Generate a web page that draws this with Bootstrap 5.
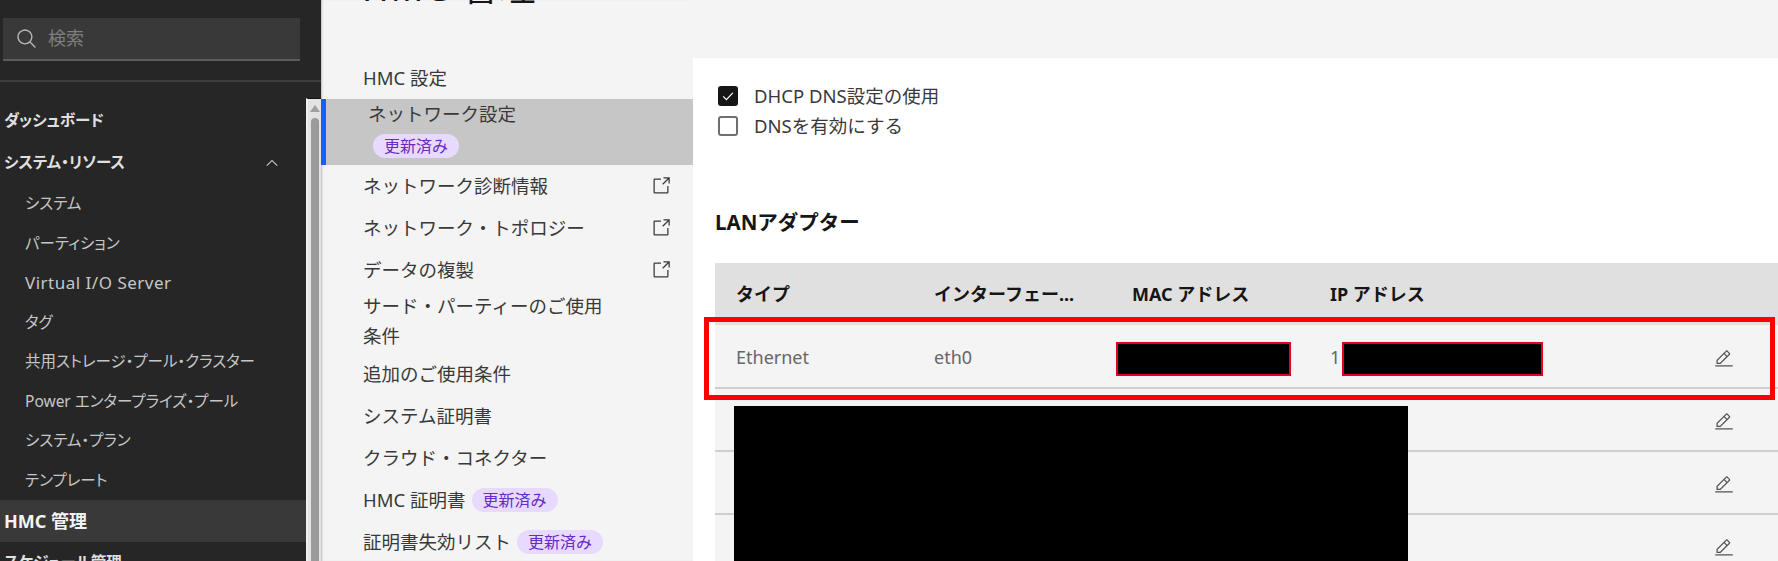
<!DOCTYPE html>
<html lang="ja">
<head>
  <meta charset="UTF-8" />
  <title>HMC 管理</title>
  <link href="https://cdn.jsdelivr.net/npm/bootstrap@5.3.0/dist/css/bootstrap.min.css" rel="stylesheet">
  <style>
    html, body { height: 561px; overflow: hidden; }
    body { font-family: "Noto Sans", "Noto Sans CJK JP", sans-serif; font-size: 18px; background: #f4f4f4; color: #393939; }
    .page-wrap { position: relative; height: 561px; overflow: hidden; }

    /* サイドバー */
    .side-bar { width: 321px; flex: none; background: #262626; color: #c6c6c6; font-feature-settings: "palt"; }
    .side-top { height: 98px; padding-top: 18px; }
    .search-box { margin: 0 21px 0 3px; height: 43px; background: #393939; border-bottom: 2px solid #5c5c5c; padding-left: 13px; gap: 10px; color: #7f7f7f; font-size: 18px; }
    .side-line { margin-top: 19px; height: 2px; background: #3d3d3d; }
    .side-nav { width: 306px; padding-top: 2px; }
    .side-item { height: 42px; padding-left: 4px; padding-right: 25px; font-weight: 700; color: #e0e0e0; font-size: 15.5px; }
    .side-item.is-on { background: #393939; color: #f4f4f4; font-size: 18px; }
    .side-sub { height: 39.5px; padding-left: 25px; font-size: 15.5px; }
    .side-latin { font-size: 17px; letter-spacing: .5px; }
    .side-scroll { width: 15px; background: #e3e3e3; border-top: 1px solid #111; border-left: 2px solid #f0f0f0; }
    .scroll-arrow { width: 0; height: 0; margin: 6px auto 6px; border: 5px solid transparent; border-top: 0; border-bottom: 7px solid #a0a0a0; }
    .scroll-thumb { width: 8px; margin: 0 auto; height: 500px; background: #9b9b9b; border-radius: 4px 4px 0 0; }

    /* メニュー */
    .menu-col { width: 372px; flex: none; box-shadow: inset 2px 0 2px -1px #bbb; }
    .page-title { height: 57px; overflow: hidden; padding-left: 41px; }
    .page-title h1 { margin: -32px 0 0; font-size: 36px; line-height: 40px; font-weight: 400; letter-spacing: 2px; color: #161616; }
    .menu-item { min-height: 42px; padding-left: 42px; padding-right: 22px; font-size: 18.5px; color: #393939; }
    .menu-item.is-wrap { min-height: 60px; line-height: 30px; margin-bottom: 2px; }
    .menu-item.is-active { height: 66px; background: #c6c6c6; border-left: 5px solid #0f62fe; padding-left: 42px; }
    .menu-text { width: 250px; }
    .active-label { line-height: 30px; }
    .upd-tag { display: inline-block; font-size: 16px; line-height: 24px; height: 24px; padding: 0 11px; border-radius: 12px; background: #e8daff; color: #6929c4; }
    .upd-tag.ms-tag { margin-left: 6px; }
    .upd-tag.under { margin: 5px 0 0 5px; }

    /* 右パネル */
    .panel-area { margin-top: 58px; background: #fff; min-width: 0; padding: 23px 0 0 22px; }
    .chk-row { height: 30px; margin: 0 0 0 3px; gap: 16px; font-size: 18.5px; }
    .chk-row .form-check-input { width: 20px; height: 20px; margin: 0; flex: none; border: 2px solid #6f6f6f; border-radius: 3px; }
    .chk-row .form-check-input:checked { background-color: #161616; border-color: #161616; background-image: url("data:image/svg+xml,%3csvg xmlns='http://www.w3.org/2000/svg' viewBox='0 0 20 20'%3e%3cpath fill='none' stroke='%23fff' stroke-width='1.5' d='M4 10.5l4 4 8-8.5'/%3e%3c/svg%3e"); }
    .lan-title { margin: 62px 0 0; height: 39px; line-height: 39px; font-size: 20.5px; font-weight: 700; color: #161616; }
    .lan-table { margin: 21px 0 0; table-layout: fixed; width: 100%; }
    .lan-table th, .lan-table td { padding: 0 0 0 21px; vertical-align: middle; white-space: nowrap; }
    .lan-table thead th { height: 62px; background: #e0e0e0; color: #161616; font-weight: 700; border: 0; font-size: 18px; }
    .lan-table tbody td { height: 63px; background: #f4f4f4; color: #666; border-bottom: 2px solid #cfcfcf; font-size: 18px; padding-top: 2px; }
    .lan-table .col-fix { width: 198px; }
    .lan-table .edit-cell { text-align: right; padding-right: 44px; }

    /* 墨消しと注記 */
    .mask-black { position: absolute; background: #000; }
    .mask-mac { left: 1116px; top: 342px; width: 175px; height: 34px; border: 2px solid #e6001e; }
    .mask-ip { left: 1342px; top: 342px; width: 201px; height: 34px; border: 2px solid #e6001e; }
    .mask-rows { left: 734px; top: 406px; width: 674px; height: 155px; }
    .red-mark { position: absolute; left: 704px; top: 317px; width: 1071px; height: 83px; border: 5px solid #f00; }
  </style>
</head>
<body>
  <div class="page-wrap d-flex">
    <div class="side-bar">
      <div class="side-top">
        <div class="search-box d-flex align-items-center">
          <svg width="22" height="22" viewBox="0 0 32 32" fill="#b5b5b5"><path d="M29,27.5859l-7.5521-7.5521a11.0177,11.0177,0,1,0-1.4141,1.4141L27.5859,29ZM4,13a9,9,0,1,1,9,9A9.01,9.01,0,0,1,4,13Z"/></svg>
          <span>検索</span>
        </div>
        <div class="side-line"></div>
      </div>
      <div class="d-flex">
        <div class="side-nav">
          <div class="side-item d-flex align-items-center">ダッシュボード</div>
          <div class="side-item d-flex align-items-center justify-content-between">
            <span>システム・リソース</span>
            <svg width="18" height="18" viewBox="0 0 32 32" fill="#c6c6c6"><path d="M16 10 26 20 24.6 21.4 16 12.8 7.4 21.4 6 20z"/></svg>
          </div>
          <div class="side-sub d-flex align-items-center">システム</div>
          <div class="side-sub d-flex align-items-center">パーティション</div>
          <div class="side-sub d-flex align-items-center"><span class="side-latin">Virtual I/O Server</span></div>
          <div class="side-sub d-flex align-items-center">タグ</div>
          <div class="side-sub d-flex align-items-center">共用ストレージ・プール・クラスター</div>
          <div class="side-sub d-flex align-items-center">Power エンタープライズ・プール</div>
          <div class="side-sub d-flex align-items-center">システム・プラン</div>
          <div class="side-sub d-flex align-items-center">テンプレート</div>
          <div class="side-item is-on d-flex align-items-center">HMC 管理</div>
          <div class="side-item d-flex align-items-center">スケジュール管理</div>
        </div>
        <div class="side-scroll">
          <div class="scroll-arrow"></div>
          <div class="scroll-thumb"></div>
        </div>
      </div>
    </div>

    <div class="menu-col">
      <div class="page-title"><h1>HMC 管理</h1></div>
      <div class="menu-item d-flex align-items-center">HMC 設定</div>
      <div class="menu-item is-active">
        <div class="active-label">ネットワーク設定</div>
        <span class="upd-tag under">更新済み</span>
      </div>
      <div class="menu-item d-flex align-items-center justify-content-between">
        <span>ネットワーク診断情報</span>
        <svg width="20" height="20" viewBox="0 0 32 32" fill="#393939"><path d="M26,28H6a2.0027,2.0027,0,0,1-2-2V6A2.0027,2.0027,0,0,1,6,4H16V6H6V26H26V16h2V26A2.0027,2.0027,0,0,1,26,28Z"/><path d="M20 2 20 4 26.586 4 18 12.586 19.414 14 28 5.414 28 12 30 12 30 2 20 2"/></svg>
      </div>
      <div class="menu-item d-flex align-items-center justify-content-between">
        <span>ネットワーク・トポロジー</span>
        <svg width="20" height="20" viewBox="0 0 32 32" fill="#393939"><path d="M26,28H6a2.0027,2.0027,0,0,1-2-2V6A2.0027,2.0027,0,0,1,6,4H16V6H6V26H26V16h2V26A2.0027,2.0027,0,0,1,26,28Z"/><path d="M20 2 20 4 26.586 4 18 12.586 19.414 14 28 5.414 28 12 30 12 30 2 20 2"/></svg>
      </div>
      <div class="menu-item d-flex align-items-center justify-content-between">
        <span>データの複製</span>
        <svg width="20" height="20" viewBox="0 0 32 32" fill="#393939"><path d="M26,28H6a2.0027,2.0027,0,0,1-2-2V6A2.0027,2.0027,0,0,1,6,4H16V6H6V26H26V16h2V26A2.0027,2.0027,0,0,1,26,28Z"/><path d="M20 2 20 4 26.586 4 18 12.586 19.414 14 28 5.414 28 12 30 12 30 2 20 2"/></svg>
      </div>
      <div class="menu-item is-wrap d-flex align-items-center"><span class="menu-text">サード・パーティーのご使用条件</span></div>
      <div class="menu-item d-flex align-items-center">追加のご使用条件</div>
      <div class="menu-item d-flex align-items-center">システム証明書</div>
      <div class="menu-item d-flex align-items-center">クラウド・コネクター</div>
      <div class="menu-item d-flex align-items-center">HMC 証明書<span class="upd-tag ms-tag">更新済み</span></div>
      <div class="menu-item d-flex align-items-center">証明書失効リスト<span class="upd-tag ms-tag">更新済み</span></div>
    </div>

    <div class="panel-area flex-grow-1">
      <div class="form-check chk-row d-flex align-items-center p-0">
        <input class="form-check-input" type="checkbox" id="useDhcp" checked>
        <label class="form-check-label" for="useDhcp">DHCP DNS設定の使用</label>
      </div>
      <div class="form-check chk-row d-flex align-items-center p-0">
        <input class="form-check-input" type="checkbox" id="useDns">
        <label class="form-check-label" for="useDns">DNSを有効にする</label>
      </div>
      <h2 class="lan-title">LANアダプター</h2>
      <table class="table lan-table">
        <thead>
          <tr>
            <th class="col-fix">タイプ</th>
            <th class="col-fix">インターフェー...</th>
            <th class="col-fix">MAC アドレス</th>
            <th class="col-fix">IP アドレス</th>
            <th></th>
          </tr>
        </thead>
        <tbody>
          <tr>
            <td>Ethernet</td><td>eth0</td><td></td><td>1</td>
            <td class="edit-cell"><svg width="20" height="20" viewBox="0 0 32 32" fill="#525252"><path d="M2 26H30V28H2zM25.4 9c.8-.8.8-2 0-2.8l-3.6-3.6c-.8-.8-2-.8-2.8 0l-15 15V24h6.4L25.4 9zM20.4 4L24 7.6l-3 3L17.4 7 20.4 4zM6 22v-3.6l10-10 3.6 3.6-10 10H6z"/></svg></td>
          </tr>
          <tr>
            <td></td><td></td><td></td><td></td>
            <td class="edit-cell"><svg width="20" height="20" viewBox="0 0 32 32" fill="#525252"><path d="M2 26H30V28H2zM25.4 9c.8-.8.8-2 0-2.8l-3.6-3.6c-.8-.8-2-.8-2.8 0l-15 15V24h6.4L25.4 9zM20.4 4L24 7.6l-3 3L17.4 7 20.4 4zM6 22v-3.6l10-10 3.6 3.6-10 10H6z"/></svg></td>
          </tr>
          <tr>
            <td></td><td></td><td></td><td></td>
            <td class="edit-cell"><svg width="20" height="20" viewBox="0 0 32 32" fill="#525252"><path d="M2 26H30V28H2zM25.4 9c.8-.8.8-2 0-2.8l-3.6-3.6c-.8-.8-2-.8-2.8 0l-15 15V24h6.4L25.4 9zM20.4 4L24 7.6l-3 3L17.4 7 20.4 4zM6 22v-3.6l10-10 3.6 3.6-10 10H6z"/></svg></td>
          </tr>
          <tr>
            <td></td><td></td><td></td><td></td>
            <td class="edit-cell"><svg width="20" height="20" viewBox="0 0 32 32" fill="#525252"><path d="M2 26H30V28H2zM25.4 9c.8-.8.8-2 0-2.8l-3.6-3.6c-.8-.8-2-.8-2.8 0l-15 15V24h6.4L25.4 9zM20.4 4L24 7.6l-3 3L17.4 7 20.4 4zM6 22v-3.6l10-10 3.6 3.6-10 10H6z"/></svg></td>
          </tr>
        </tbody>
      </table>
    </div>

    <div class="mask-black mask-mac"></div>
    <div class="mask-black mask-ip"></div>
    <div class="mask-black mask-rows"></div>
    <div class="red-mark"></div>
  </div>
  <script src="https://cdn.jsdelivr.net/npm/bootstrap@5.3.0/dist/js/bootstrap.bundle.min.js"></script>
</body>
</html>
